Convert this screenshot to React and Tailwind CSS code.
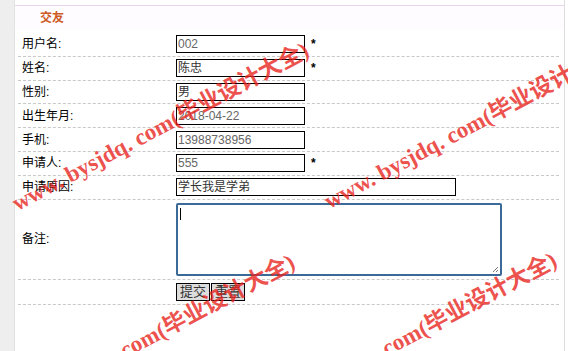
import React from 'react';

const rows = [
  { label: '用户名:', value: '002', star: true },
  { label: '姓名:', value: '陈忠', star: true, dark: true },
  { label: '性别:', value: '男', dark: true },
  { label: '出生年月:', value: '2018-04-22' },
  { label: '手机:', value: '13988738956' },
  { label: '申请人:', value: '555', star: true },
  { label: '申请原因:', value: '学长我是学弟', wide: true, dark: true },
];

const Watermark = ({ className }) => (
  <div
    className={`absolute whitespace-nowrap font-bold text-[23px] text-[#e8231c]/80 origin-left pointer-events-none ${className}`}
    style={{ fontFamily: '"Liberation Serif", "Noto Sans CJK SC", serif' }}
  >
    www. bysjdq. com(毕业设计大全)
  </div>
);

const App = () => {
  return (
    <div
      className="relative w-[568px] h-[351px] overflow-hidden bg-white text-[12px] text-black"
      style={{ fontFamily: '"Liberation Sans", "Noto Sans CJK SC", sans-serif' }}
    >
      <div className="flex h-full">
        {/* left strip */}
        <div className="w-[15px] bg-[#eeeeee] border-r border-[#e2e2e2]" />

        <div className="flex-1 flex flex-col border-r border-[#dddddd] mr-[3px]">
          {/* header */}
          <div className="mt-[5px] h-[25px] border-t border-[#ead6ea] bg-[#fefcfe] flex items-center pl-[25px]">
            <span className="font-bold text-[#cc5a24]">交友</span>
          </div>

          {/* form */}
          <div className="pt-[3px] pl-[3px] pr-[5px]">
            {rows.map((r) => (
              <div key={r.label} className="flex items-center h-[23.8px] border-b border-dashed border-[#c8c8c8]">
                <div className="w-[158px] pl-[4px]">{r.label}</div>
                <div
                  className={`h-[18px] border border-black flex items-center pl-[1px] ${r.wide ? 'w-[280px]' : 'w-[129px]'} ${r.dark ? 'text-[#333]' : 'text-[#666]'}`}
                >
                  {r.value}
                </div>
                {r.star && <span className="ml-[6px] font-bold">*</span>}
              </div>
            ))}

            <div className="flex items-center h-[80px] border-b border-dashed border-[#c8c8c8]">
              <div className="w-[158px] pl-[4px]">备注:</div>
              <div className="relative w-[326px] h-[73px] border-2 border-[#3b6a98] rounded-[2px] bg-white">
                <div className="absolute left-[2px] top-[3px] w-px h-[12px] bg-black" />
                <svg className="absolute right-[1px] bottom-[1px]" width="7" height="7" viewBox="0 0 7 7">
                  <path d="M1 6 L6 1 M4 6 L6 4" stroke="#777" strokeWidth="1" />
                </svg>
              </div>
            </div>

            <div className="flex items-center h-[25px] border-b border-dashed border-[#c8c8c8]">
              <div className="w-[158px]" />
              <button className="h-[18px] px-[3px] border border-black bg-[#dddddd] text-[#333] text-[13px] leading-none">提交</button>
              <button className="h-[18px] px-[3px] ml-px border border-black bg-[#dddddd] text-[#333] text-[13px] leading-none">重置</button>
            </div>
          </div>
        </div>
      </div>

      {/* watermarks */}
      <Watermark className="left-[14px] top-[188px] -rotate-[28deg]" />
      <Watermark className="left-[326px] top-[186px] -rotate-[28deg]" />
      <Watermark className="left-[0px] top-[400px] -rotate-[28deg]" />
      <Watermark className="left-[262px] top-[398px] -rotate-[28deg]" />
    </div>
  );
};

export default App;
